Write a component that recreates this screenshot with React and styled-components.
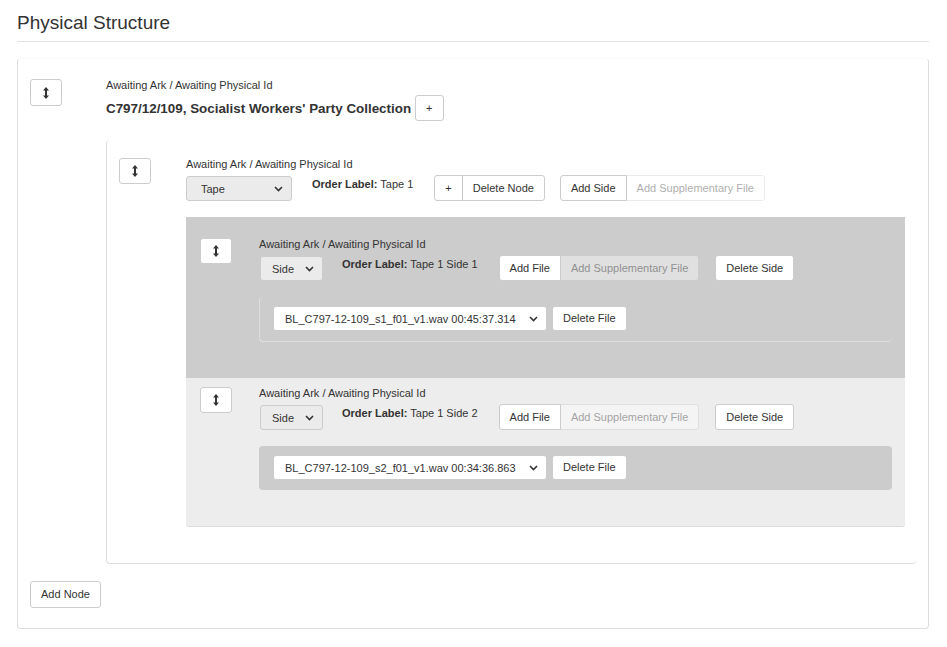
import React from "react";
import styled, { createGlobalStyle } from "styled-components";

const GlobalStyle = createGlobalStyle`
  body {
    margin: 0;
    background: #fff;
    color: #333;
    font-family: "Liberation Sans", Arial, sans-serif;
    font-size: 11px;
  }
`;

const Page = styled.div`
  padding: 0 18px 0 17px;
`;

const Heading = styled.h2`
  margin: 0;
  padding: 12px 0 7px;
  font-size: 19px;
  font-weight: normal;
  line-height: normal;
  border-bottom: 1px solid #e3e3e3;
`;

const Panel = styled.section`
  margin-top: 16px;
  padding: 20px 12px 20px 12px;
  border: 1px solid #ddd;
  border-top-color: #fafafa;
  border-radius: 4px;
`;

const Node = styled.div`
  display: grid;
  grid-template-columns: ${(p) => p.$lead}px 1fr;
  align-items: start;
`;

const Content = styled.div`
  min-width: 0;
`;

const Button = styled.button`
  height: ${(p) => p.$h || 26}px;
  padding: 0 10px;
  border: 1px solid #ccc;
  border-radius: 3px;
  background: #fff;
  color: #333;
  font-family: inherit;
  font-size: 11px;
  line-height: 1;
  white-space: nowrap;
  cursor: pointer;
  &:disabled {
    opacity: 0.4;
    cursor: default;
  }
`;

const Handle = styled(Button)`
  width: 32px;
  padding: 0;
  display: flex;
  align-items: center;
  justify-content: center;
`;

const Group = styled.div`
  display: inline-flex;
  margin-right: ${(p) => p.$gap || 0}px;
  & > button:not(:first-child) {
    margin-left: -1px;
    border-top-left-radius: 0;
    border-bottom-left-radius: 0;
  }
  & > button:not(:last-child) {
    border-top-right-radius: 0;
    border-bottom-right-radius: 0;
  }
`;

const IdLabel = styled.div`
  font-size: 11px;
  line-height: 13px;
`;

const TitleRow = styled.div`
  display: flex;
  align-items: center;
  gap: 4px;
  margin-top: 3px;
`;

const Title = styled.h3`
  margin: 0;
  font-size: 13.4px;
  font-weight: bold;
`;

const Row = styled.div`
  display: flex;
  align-items: flex-start;
  margin-top: 4px;
`;

const SelectBox = styled.div`
  box-sizing: border-box;
  width: ${(p) => p.$width}px;
  height: 25px;
  margin: ${(p) => p.$top || 0}px ${(p) => p.$gap || 0}px 0 ${(p) => p.$shift || 0}px;
  padding: 0 8px 0 ${(p) => p.$indent || 12}px;
  display: flex;
  align-items: center;
  justify-content: space-between;
  border: 1px solid #ccc;
  border-radius: 3px;
  background: ${(p) => (p.$light ? "#fff" : "#ebebeb")};
  font-size: 11px;
  white-space: nowrap;
`;

const OrderLabel = styled.div`
  padding-top: 3px;
  margin-right: 21px;
  line-height: 13px;
  white-space: nowrap;
  b {
    font-weight: bold;
  }
`;

const Box = styled.div`
  margin-top: 19px;
  padding: 18px 11px 36px 12px;
  border-left: 1px solid #ddd;
  border-bottom: 1px solid #ddd;
  border-radius: 4px;
`;

const Sides = styled.div`
  margin-top: 16px;
`;

const SideBox = styled.div`
  padding: ${(p) => p.$top}px 13px 36px 14px;
  background: ${(p) => (p.$dark ? "#cccccc" : "#ededed")};
  border-bottom: ${(p) => (p.$dark ? "none" : "1px solid #dcdcdc")};
  border-radius: ${(p) => (p.$dark ? "0" : "0 0 3px 3px")};
`;

const Files = styled.div`
  margin-top: 16px;
  padding: 9px 13px ${(p) => (p.$dark ? 10 : 9)}px;
  background: ${(p) => (p.$dark ? "transparent" : "#cccccc")};
  border-left: 1px solid ${(p) => (p.$dark ? "#dedede" : "#cccccc")};
  border-bottom: 1px solid ${(p) => (p.$dark ? "#dedede" : "#cccccc")};
  border-radius: 4px;
`;

const FileRow = styled.div`
  display: flex;
  align-items: center;
  gap: 5px;
`;

const AddNode = styled(Button)`
  margin-top: 17px;
`;

const Arrows = () => (
  <svg width="6" height="12" viewBox="0 0 6 12" aria-hidden="true">
    <path d="M3 0 L6 3.6 H4 V8.4 H6 L3 12 L0 8.4 H2 V3.6 H0 Z" fill="#333" />
  </svg>
);

const Chevron = () => (
  <svg width="9" height="6" viewBox="0 0 9 6" aria-hidden="true">
    <path d="M1 1 L4.5 4.5 L8 1" fill="none" stroke="#333" strokeWidth="1.6" />
  </svg>
);

const Select = ({ value, ...rest }) => (
  <SelectBox {...rest}>
    <span>{value}</span>
    <Chevron />
  </SelectBox>
);

const ID = "Awaiting Ark / Awaiting Physical Id";

const sides = [
  {
    label: "Tape 1 Side 1",
    file: "BL_C797-12-109_s1_f01_v1.wav 00:45:37.314",
    dark: true,
    top: 21,
  },
  {
    label: "Tape 1 Side 2",
    file: "BL_C797-12-109_s2_f01_v1.wav 00:34:36.863",
    dark: false,
    top: 9,
  },
];

function Side({ label, file, dark, top }) {
  return (
    <SideBox $dark={dark} $top={top}>
      <Node $lead={59}>
        <Handle>
          <Arrows />
        </Handle>
        <Content>
          <IdLabel>{ID}</IdLabel>
          <Row>
            <Select value="Side" $width={63} $indent={11} $gap={19} $shift={1} $top={1} />
            <OrderLabel>
              <b>Order Label:</b> {label}
            </OrderLabel>
            <Group $gap={16}>
              <Button>Add File</Button>
              <Button disabled>Add Supplementary File</Button>
            </Group>
            <Button>Delete Side</Button>
          </Row>
          <Files $dark={dark}>
            <FileRow>
              <Select value={file} $width={274} $indent={11} $light />
              <Button $h={25}>Delete File</Button>
            </FileRow>
          </Files>
        </Content>
      </Node>
    </SideBox>
  );
}

export default function App() {
  return (
    <Page>
      <GlobalStyle />
      <Heading>Physical Structure</Heading>
      <Panel>
        <Node $lead={76}>
          <Handle $h={27}>
            <Arrows />
          </Handle>
          <Content>
            <IdLabel>{ID}</IdLabel>
            <TitleRow>
              <Title>C797/12/109, Socialist Workers' Party Collection</Title>
              <Button>+</Button>
            </TitleRow>
            <Box>
              <Node $lead={67}>
                <Handle>
                  <Arrows />
                </Handle>
                <Content>
                  <IdLabel>{ID}</IdLabel>
                  <Row>
                    <Select value="Tape" $width={106} $indent={14} $gap={20} $top={1} />
                    <OrderLabel>
                      <b>Order Label:</b> Tape 1
                    </OrderLabel>
                    <Group $gap={15}>
                      <Button>+</Button>
                      <Button>Delete Node</Button>
                    </Group>
                    <Group>
                      <Button>Add Side</Button>
                      <Button disabled>Add Supplementary File</Button>
                    </Group>
                  </Row>
                  <Sides>
                    {sides.map((s) => (
                      <Side key={s.label} {...s} />
                    ))}
                  </Sides>
                </Content>
              </Node>
            </Box>
          </Content>
        </Node>
        <AddNode $h={27}>Add Node</AddNode>
      </Panel>
    </Page>
  );
}
